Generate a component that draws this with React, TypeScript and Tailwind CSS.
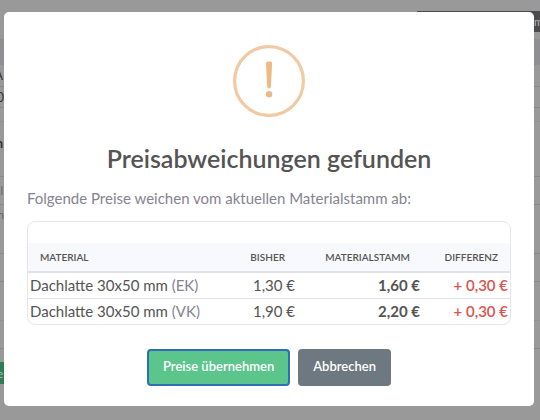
import React from "react";

interface IPriceChange {
  material: string;
  kind: string;
  before: string;
  current: string;
  difference: string;
}

const changes: IPriceChange[] = [
  {
    material: "Dachlatte 30x50 mm",
    kind: "(EK)",
    before: "1,30 €",
    current: "1,60 €",
    difference: "+ 0,30 €",
  },
  {
    material: "Dachlatte 30x50 mm",
    kind: "(VK)",
    before: "1,90 €",
    current: "2,20 €",
    difference: "+ 0,30 €",
  },
];

const Warning: React.FC = () => (
  <svg
    viewBox="0 0 72 72"
    className="block w-[72px] h-[72px] mx-auto"
    fill="none"
    aria-hidden="true"
  >
    <circle cx="36" cy="36" r="34.4" stroke="#f1c9a3" strokeWidth="3.2" />
    <path
      d="M33 18.6 Q33 16.6 34.8 16.6 H37.4 Q39.2 16.6 39.1 18.6 L38 41.5 Q37.8 43.4 36.1 43.4 Q34.4 43.4 34.2 41.5 Z"
      fill="#efba83"
    />
    <circle cx="36.1" cy="49.2" r="3.2" fill="#e9b98c" />
  </svg>
);

// Page behind the dialog, only its edges stay visible
const Page: React.FC = () => (
  <div className="min-h-screen pt-[11px] bg-[#999999] text-[13px] leading-none text-[#333333]">
    <div className="flex justify-end">
      <div className="flex items-center justify-end w-[123px] h-[21px] bg-[#4b4b4d] text-[#b5b5b5] text-[11px]">
        <span className="w-[6px]">m</span>
      </div>
    </div>
    <div className="h-[26px] mt-[7px] bg-[#8e8e93]" />
    <div className="flex items-center h-[22px] border-b border-[#898989]">
      <span className="flex justify-end w-[3px]">A</span>
    </div>
    <div className="flex items-center h-[21px] border-b border-[#898989]">
      <span className="flex justify-end w-1">0</span>
    </div>
    <div className="h-[14px] border-b border-[#929292]" />
    <div className="flex items-center h-[55px] pb-3 border-b border-[#898989] font-bold">
      <span className="flex justify-end w-[3px]">n</span>
    </div>
    <div className="flex items-center h-[28px] border-b border-[#898989] text-[11px] text-[#666666]">
      <span className="flex justify-end w-[3px]">el</span>
    </div>
    <div className="flex items-start h-[49px] pt-1 border-b border-[#898989] text-[11px] text-[#666666]">
      <span className="flex justify-end w-1">ch</span>
    </div>
    <div className="h-[28px] border-b border-[#898989]" />
    <div className="h-[39px] border-b border-[#929292]" />
    <div className="h-[28px] border-b border-[#898989]" />
    <div className="flex items-center w-2 h-[22px] mt-[13px] bg-[#2f7d54] text-[#b5b5b5] text-[11px]">
      <span className="flex justify-end w-[3px]">e</span>
    </div>
  </div>
);

const App: React.FC = () => {
  return (
    <div className="relative min-h-screen overflow-hidden font-[Lato,sans-serif]">
      <Page />

      <div
        role="dialog"
        aria-modal="true"
        aria-labelledby="dialog-title"
        className="absolute top-3 left-1 right-[6px] px-[23px] pt-[33px] pb-5 rounded-[5px] bg-white text-[#545454]"
      >
        <Warning />
        <h2
          id="dialog-title"
          className="mt-[25px] text-center text-[25px] leading-8 font-semibold"
        >
          Preisabweichungen gefunden
        </h2>
        <p className="mt-3 text-[15px] leading-6 text-[#85838f]">
          Folgende Preise weichen vom aktuellen Materialstamm ab:
        </p>

        <div className="mt-[11px] pt-[21px] border border-[#e4e6ec] rounded-lg overflow-hidden">
          <table className="w-full text-[15px] leading-6">
            <thead className="bg-[#f8f9fc] text-[10px] leading-[28px] uppercase">
              <tr className="border-b-2 border-[#dfe2ec]">
                <th className="px-3 text-left font-semibold">Material</th>
                <th className="px-3 text-right font-semibold">Bisher</th>
                <th className="w-[125px] px-3 text-right font-semibold">
                  Materialstamm
                </th>
                <th className="w-[88px] px-3 text-right font-semibold">
                  Differenz
                </th>
              </tr>
            </thead>
            <tbody>
              {changes.map((change) => (
                <tr
                  key={change.kind}
                  className="h-[26px] border-b border-[#e0e2ea] last:border-b-0"
                >
                  <td className="px-0.5">
                    {change.material}{" "}
                    <span className="text-[#85838f]">{change.kind}</span>
                  </td>
                  <td className="px-0.5 text-right">{change.before}</td>
                  <td className="px-0.5 text-right font-bold">
                    {change.current}
                  </td>
                  <td className="px-0.5 text-right font-semibold text-[#d9534f]">
                    {change.difference}
                  </td>
                </tr>
              ))}
            </tbody>
          </table>
        </div>

        <div className="flex justify-center gap-2 mt-6">
          <button
            type="button"
            className="h-[37px] px-[14px] pb-0.5 border-2 border-[#2f6db5] rounded bg-[#5bc58c] text-[13px] font-semibold text-white"
          >
            Preise übernehmen
          </button>
          <button
            type="button"
            className="h-[37px] px-[15px] pb-0.5 rounded bg-[#6e7881] text-[13px] font-semibold text-white"
          >
            Abbrechen
          </button>
        </div>
      </div>
    </div>
  );
};

export default App;
